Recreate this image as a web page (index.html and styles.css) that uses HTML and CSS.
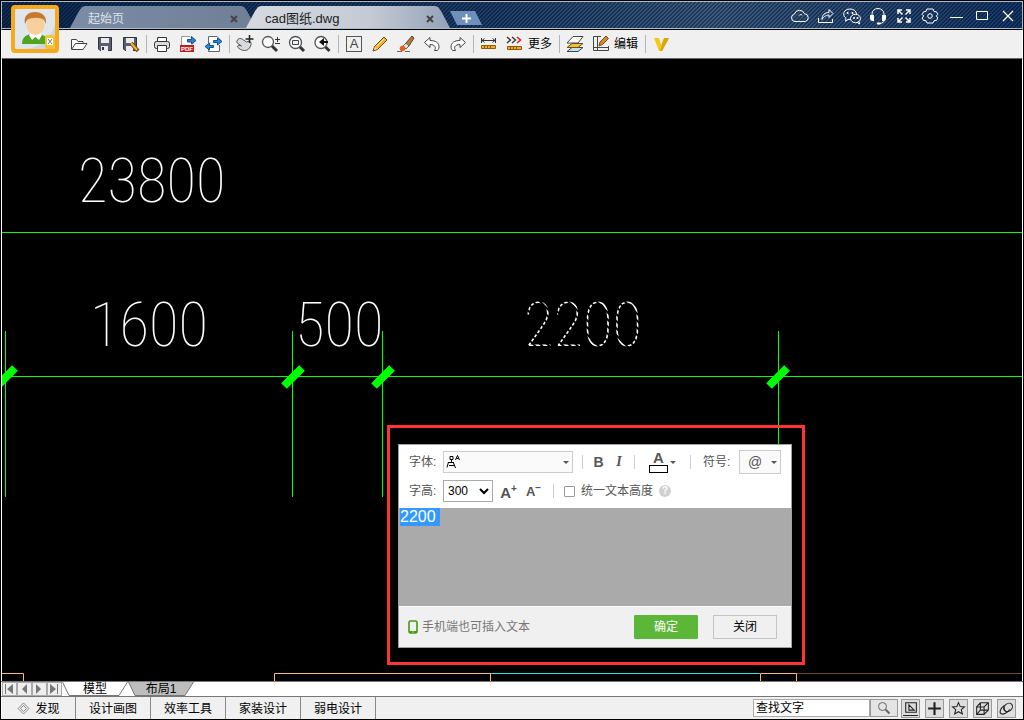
FILE: index.html
```
<!DOCTYPE html>
<html lang="zh-CN">
<head>
  <meta charset="UTF-8" />
  <meta name="viewport" content="width=device-width, initial-scale=1.0"/>
  <title>cad图纸.dwg</title>
  <link rel="stylesheet" href="styles.css">
</head>
<body>

  <header class="titlebar">
    <div class="tabs">
      <div class="tab"><span>起始页</span><button class="tab-close" aria-label="关闭起始页"><svg width="8" height="8" viewBox="0 0 8 8"><path d="M1 1l6 6M7 1l-6 6"/></svg></button></div>
      <div class="tab active"><span>cad图纸.dwg</span><button class="tab-close" aria-label="关闭图纸"><svg width="8" height="8" viewBox="0 0 8 8"><path d="M1 1l6 6M7 1l-6 6"/></svg></button></div>
      <button class="tab-new" aria-label="新建"><svg width="9" height="9" viewBox="0 0 9 9"><path d="M4.5 0v9M0 4.5h9"/></svg></button>
    </div>
    <div class="window-buttons">
      <button aria-label="云"><svg viewBox="0 0 20 20"><path d="M5 15.500a3.700 3.700 0 0 1-.6-7.300A5.300 5.300 0 0 1 14.500 7.800a3.900 3.900 0 0 1 .7 7.700zM9 9.500c.6-1.200 2.500-1.300 3.300 0"/></svg></button>
      <button aria-label="分享"><svg viewBox="0 0 20 20"><path d="M2.500 12v4.500h14V13M6 13.500c0-5 3-7 7-7V3.500l4 4-4 4V9c-2 0-5 1-7 4.500z"/></svg></button>
      <button aria-label="微信"><svg viewBox="0 0 20 20"><path d="M8.500 13.500H6l-2.500 1.800.5-3C-.5 9 2 3 8 3c4 0 6.300 2.300 6.500 5"/><ellipse cx="13.500" cy="12.500" rx="5" ry="4.200"/><path d="M15 16.300l2.500 1.700-.3-2.700"/><circle class="dot" cx="5.700" cy="7" r="1"/><circle class="dot" cx="10.500" cy="7" r="1"/><circle class="dot" cx="12" cy="12" r="1"/><circle class="dot" cx="15.500" cy="12" r="1"/></svg></button>
      <button aria-label="客服"><svg viewBox="0 0 20 20"><path d="M4 11V8a6 5.500 0 0 1 12 0v3M16.500 13c0 3-2 4.500-5 4.500"/><path class="dot" d="M2 9h4v6H4.500C2.500 15 2 13 2 12zM18 9h-4v6h1.500c2 0 2.500-2 2.500-3zM9 16.500h3.500v2H9z"/></svg></button>
      <button aria-label="全屏"><svg viewBox="0 0 20 20"><path stroke-width="1.500" d="M4 8V4h4M4 4l4.500 4.500M12 4h4v4M16 4l-4.500 4.500M4 12v4h4M4 16l4.500-4.500M12 16h4v-4M16 16l-4.500-4.500"/></svg></button>
      <button aria-label="设置"><svg viewBox="0 0 20 20"><path d="M7 3h6l1 2.500 2.500.3 1.300 2.700-1.500 1.500 1.500 2-1.300 2.500-2.500.2L13 17H7l-1-2.300-2.500-.2L2.200 12l1.500-2-1.500-1.500 1.300-2.700L6 5.500z"/><circle cx="10" cy="10" r="2.300"/></svg></button>
      <button aria-label="最小化"><svg viewBox="0 0 20 20"><path d="M4 11.500h13"/></svg></button>
      <button aria-label="最大化"><svg viewBox="0 0 20 20"><path d="M4.500 5.500h11v8h-11z"/></svg></button>
      <button aria-label="关闭"><svg viewBox="0 0 20 20"><path stroke-width="1.300" d="M5 5l10 10M15 5L5 15"/></svg></button>
    </div>
    <button class="avatar" aria-label="用户">
      <svg viewBox="0 0 40 40" width="40" height="40">
        <path fill="#dfe6ec" d="M0 0h40v40H0z"/>
        <path fill="#cdd7e0" d="M40 16v24H8c14 0 26-8 32-24z"/>
        <path fill="#4fa51e" d="M7 35c0-6 3-9 9-10h8c6 1 9 4 9 10z"/>
        <path fill="#fff" d="M14 26l3-3h7l3 3-3 5-3.500-3-3.500 3z"/>
        <ellipse cx="20.500" cy="16" rx="9" ry="10" fill="#f9cf9b"/>
        <path fill="#c9792f" d="M10 15C8 6 14 3 20 3c7 0 12 4 11 12l-2-4c-3-3-13-3-17 0z"/>
        <rect x="30" y="26" width="10" height="14" rx="2" fill="#f4c437"/>
        <path fill="#fff" d="M32 29h6v7h-6z"/>
        <path stroke="#777" d="M33 30l4 5M37 30l-4 5"/>
      </svg>
    </button>
  </header>

  <nav class="toolbar">
    <button aria-label="打开"><svg viewBox="0 0 20 20"><path fill="#fff" stroke="#444" d="M2.500 15V5.500h5l1.500 2h5V10M2.500 15.500L6.500 9.500H18l-4 6z"/></svg></button>
    <button aria-label="保存"><svg viewBox="0 0 20 20"><path fill="#59606b" stroke="#30343b" d="M3.500 3.500h13v13H5l-1.500-1.500z"/><path fill="#e8ecf1" d="M6 4h8v5H6zM6 12h7v5H6z"/><path fill="#30343b" d="M7 13h2v3H7z"/></svg></button>
    <button aria-label="另存为"><svg viewBox="0 0 20 20"><path fill="#59606b" stroke="#30343b" d="M2.500 3.500h13v13H4l-1.500-1.500z"/><path fill="#e8ecf1" d="M5 4h8v5H5zM5 12h7v5H5z"/><path stroke="#7a4a10" stroke-width="4" d="M10 9l7 8"/><path stroke="#f2b23c" stroke-width="2" d="M10 9l6 7"/></svg></button>
    <i class="sep"></i>
    <button aria-label="打印"><svg viewBox="0 0 20 20"><path fill="#fff" stroke="#333" d="M5.500 8V3.500h9V8"/><rect x="2.500" y="7.500" width="15" height="7" rx="2" fill="#d9dce0" stroke="#333"/><path fill="#fff" stroke="#333" d="M5.500 11.500h9v6h-9z"/></svg></button>
    <button aria-label="导出PDF"><svg viewBox="0 0 20 20"><path fill="#fff" stroke="#999" d="M3.500 11V2.500H12l3 3V11"/><path fill="#c8161d" d="M2 11h14v7H2z"/><text class="pdf-text" x="3" y="17">PDF</text><path fill="#2b7fd0" stroke="#14508c" d="M9.500 5.500h4v-3l4.500 4-4.500 3.500V8h-4z"/></svg></button>
    <button aria-label="转换"><svg viewBox="0 0 20 20"><path fill="#fff" stroke="#666" d="M4.500 9V2.500H13l3 3M15.500 11v6.500h-11V15"/><path fill="#2b88d8" stroke="#14508c" d="M9.500 6.500h4v-2.500l4.500 3.500-4.500 3.500V8.500h-4zM9.500 11.500h-4V9L1 12.500 5.500 16v-2.500h4z"/></svg></button>
    <i class="sep"></i>
    <button aria-label="平移"><svg viewBox="0 0 20 20"><path fill="#d7dade" stroke="#555" d="M2.500 6c1-2 4-2 6 0l3 2 3-1c2 1 2 3 1 5-1 3-3 4.500-6 4.500-3 0-5-1.500-7-3.500 0-2 2-2 4-1L3 9.500c-1.500-.5-1.500-2-.5-3.500z"/><path stroke="#222" stroke-width="1.500" d="M14.500 1v8M10.500 5h8"/></svg></button>
    <button aria-label="缩放"><svg viewBox="0 0 20 20"><circle cx="7" cy="8" r="5.500" fill="#f9fbfc" stroke="#555" stroke-width="1.300"/><path stroke="#333" stroke-width="3" d="M11 12l5 5"/><path stroke="#333" d="M14 5.500h5M16.500 3v5M14 9.500h5"/></svg></button>
    <button aria-label="窗口缩放"><svg viewBox="0 0 20 20"><circle cx="8.500" cy="8.500" r="6" fill="#f9fbfc" stroke="#555" stroke-width="1.300"/><path fill="#e8f2f8" stroke="#444" d="M5.500 6.500h6v4h-6z"/><path stroke="#333" stroke-width="3" d="M13 13l4 4"/></svg></button>
    <button aria-label="上一视图"><svg viewBox="0 0 20 20"><circle cx="8" cy="8.500" r="6" fill="#f9fbfc" stroke="#555" stroke-width="1.300"/><path fill="#111" d="M6 8l5-4v3h4v2h-4v3z"/><path stroke="#333" stroke-width="3" d="M12.500 13l4 4"/></svg></button>
    <i class="sep"></i>
    <button aria-label="文字"><span class="letter-box">A</span></button>
    <button aria-label="铅笔"><svg viewBox="0 0 20 20"><path fill="#f5b52e" stroke="#7a4a10" d="M3 17l1.500-4.500L14 3l3 3-9.500 9.500z"/><path fill="#f7dcb0" d="M4 16l1-3 2 2z"/><path stroke="#fff0b0" d="M7 12l7-7"/></svg></button>
    <button aria-label="擦除"><svg viewBox="0 0 20 20"><path fill="#b27b45" stroke="#69401a" d="M10 9l6-7 2 2-5 8z"/><path fill="#ddd" stroke="#666" d="M7 12l3-3 3 3-3 3z"/><circle cx="6.500" cy="14.500" r="2.800" fill="#ef5a1c"/><path stroke="#666" d="M1 17.500h5M9 17.500h5"/></svg></button>
    <button aria-label="撤销"><svg viewBox="0 0 20 20"><path fill="#fff" stroke="#444" d="M2.500 8.500L8 3.500v3c6 0 9 2.500 9 6.500 0 1-.5 2.500-1.500 3.500h-3c2-3 .5-6-4.500-6v3z"/></svg></button>
    <button aria-label="重做"><svg viewBox="0 0 20 20"><path fill="#fff" stroke="#444" d="M17.500 8.500L12 3.500v3c-6 0-9 2.500-9 6.500 0 1 .5 2.500 1.500 3.500h3c-2-3-.5-6 4.500-6v3z"/></svg></button>
    <i class="sep"></i>
    <button aria-label="测量"><svg viewBox="0 0 20 20"><path stroke="#333" d="M2.500 4v5M16.500 4v5M3 6.500h13M5.500 4.500L3 6.500l2.500 2M13.500 4.500l2.500 2-2.500 2"/><path fill="#f0ae20" stroke="#8b5c0c" d="M2.500 11.500h14v3h-14z"/><path stroke="#8b5c0c" d="M5.500 12v2M8.500 12v2M11.500 12v2"/></svg></button>
    <button class="wide" aria-label="更多测量"><svg viewBox="0 0 20 20"><path stroke="#333" stroke-width="1.300" d="M2 3l3.500 3L2 9M7 3l3.500 3L7 9"/><path stroke="#e02020" stroke-width="1.600" d="M12 3l3.500 3-3.500 3"/><path fill="#f0ae20" stroke="#8b5c0c" d="M2.500 12.500h14v3h-14z"/><path stroke="#8b5c0c" d="M5.500 13v2M8.500 13v2M11.500 13v2"/></svg><span>更多</span></button>
    <i class="sep"></i>
    <button aria-label="图层"><svg viewBox="0 0 20 20"><path fill="#bfe3ee" stroke="#444" d="M2 17.500l5-4h11l-5 4z"/><path fill="#f6bd30" stroke="#6b5210" d="M2 13.500l5-4h11l-5 4z"/><path fill="#fff" stroke="#444" d="M2 9L8 2.500h10L13 9z"/></svg></button>
    <button class="wide" aria-label="编辑图纸"><svg viewBox="0 0 20 20"><path stroke="#444" d="M10 2.500H2.500v14h15V12M6.500 3v13M3 13.500h14"/><path fill="#d98a28" stroke="#7a4a10" d="M8 12l1-4 6-6 2.500 2.500-6 6z"/></svg><span>编辑</span></button>
    <i class="sep"></i>
    <button aria-label="会员"><svg viewBox="0 0 20 20"><path fill="#f5c81c" d="M3 4h5l2 7 3-7h5l-7 13H8z"/><path fill="#d8a50c" d="M13 4h5l-7 13H9z"/></svg></button>
  </nav>

  <main class="canvas">
    <svg class="drawing" width="100%" height="100%">
      <defs>
        <pattern id="dashes" width="5" height="5" patternUnits="userSpaceOnUse" patternTransform="rotate(-45)">
          <path fill="#fff" d="M0 0h3v5H0z"/>
        </pattern>
      </defs>
      <g class="dimension">
        <path d="M0 173.500h4000M0 317.500h4000M3.500 272v166M290.500 272v166M380.500 272v166M776.500 272v166"/>
        <path class="tick" d="M-5 327l18-18M282 327l18-18M372 327l18-18M767 327l18-18"/>
      </g>
      <g class="dim-text">
        <text x="76" y="143">23800</text>
        <text x="88" y="287">1600</text>
        <text x="293" y="287">500</text>
        <text class="picked" x="522" y="287">2200</text>
      </g>
      <g class="frame">
        <path d="M0 614.500h21.500V623M272.500 623v-8.500H488M488.500 614v9M758.500 623v-8.500h36V623"/>
        <path class="cyan" d="M489 614.500h269"/>
        <path class="brown" d="M795 614.500h3200"/>
      </g>
    </svg>

    <div class="highlight">
      <form class="text-editor">
        <div class="row">
          <label for="font">字体:</label>
          <span class="font-picker">
            <select id="font"><option></option></select>
            <svg width="14" height="14" viewBox="0 0 14 14"><path d="M4 1.500h3v3H4zM5.500 5v2M2 7.500h6M2.500 7L1 12.500M7.500 8l2 5M3 10.500h6M9.500 5l2-4.500 2 4.500M10.500 3.500h2"/></svg>
            <i class="caret"></i>
          </span>
          <i class="divider"></i>
          <button type="button" class="style-btn bold">B</button>
          <button type="button" class="style-btn italic">I</button>
          <i class="divider"></i>
          <button type="button" class="color-btn"><span class="color-letter">A</span><i class="caret"></i></button>
          <i class="divider"></i>
          <span class="symbol-label">符号:</span>
          <button type="button" class="symbol-btn">@<i class="caret"></i></button>
        </div>
        <div class="row">
          <label for="size">字高:</label>
          <select id="size"><option>300</option></select>
          <button type="button" class="size-btn">A<sup>+</sup></button>
          <button type="button" class="size-btn small">A<sup>−</sup></button>
          <i class="divider"></i>
          <input type="checkbox" id="unify">
          <label class="unify" for="unify">统一文本高度</label>
          <span class="help">?</span>
        </div>
        <textarea id="content" aria-label="文本内容">2200 </textarea>
        <div class="editor-footer">
          <svg width="10" height="14" viewBox="0 0 10 14"><rect x="1" y="1" width="8" height="12" rx="1.500" fill="none" stroke="#479a12" stroke-width="1.600"/><path fill="#479a12" d="M1 11h8v2H1z"/><path fill="#fff" d="M4.500 11.500h1v1h-1z"/></svg>
          <span>手机端也可插入文本</span>
          <button type="button" class="ok">确定</button>
          <button type="button" class="cancel">关闭</button>
        </div>
      </form>
    </div>
  </main>

  <div class="layouts">
    <button class="step" aria-label="第一个"><svg viewBox="0 0 12 10"><path d="M2 0h1v10H2zM10 0v10L4 5z"/></svg></button>
    <button class="step" aria-label="上一个"><svg viewBox="0 0 12 10"><path d="M9 0v10L4 5z"/></svg></button>
    <button class="step" aria-label="下一个"><svg viewBox="0 0 12 10"><path d="M3 0v10l5-5z"/></svg></button>
    <button class="step" aria-label="最后一个"><svg viewBox="0 0 12 10"><path d="M9 0h1v10H9zM2 0v10l6-5z"/></svg></button>
    <button class="layout-tab"><svg viewBox="0 0 66 14"><path fill="#fff" stroke="#777" d="M.5 0L7 13.500h50L65.500 0"/></svg><span>模型</span></button>
    <button class="layout-tab"><svg viewBox="0 0 66 14"><path fill="#bdbdbd" stroke="#777" d="M.5 0L7 13.500h50L65.500 0"/></svg><span>布局1</span></button>
  </div>

  <footer class="statusbar">
    <a href="#" class="panel discover"><svg width="13" height="13" viewBox="0 0 13 13"><path d="M6.500 1L12 6.500 6.500 12 1 6.500z"/><path d="M6.500 3.500l3 3-3 3-3-3z"/></svg>发现</a>
    <a href="#" class="panel">设计画图</a>
    <a href="#" class="panel">效率工具</a>
    <a href="#" class="panel">家装设计</a>
    <a href="#" class="panel">弱电设计</a>
    <div class="search">
      <input type="text" value="查找文字" aria-label="查找文字">
      <button aria-label="查找"><svg width="14" height="14" viewBox="0 0 14 14"><circle cx="5.500" cy="5.500" r="4"/><path stroke-width="2" d="M8.500 8.500l4 4"/></svg></button>
    </div>
    <div class="modes">
      <button aria-label="坐标"><svg viewBox="0 0 16 16"><path d="M3.500 2.500h10v9h-10zM1 14.500h14M6.500 4.500v5h5z"/></svg></button>
      <button aria-label="十字光标"><svg viewBox="0 0 16 16"><path stroke-width="2" d="M8 2v12M2 8h12"/></svg></button>
      <button aria-label="捕捉"><svg viewBox="0 0 16 16"><path d="M8 2.500l1.600 3.700 4 .3-3 2.600 1 4L8 11l-3.600 2.100 1-4-3-2.600 4-.3z"/></svg></button>
      <button aria-label="三维"><svg viewBox="0 0 16 16"><path d="M2.500 6.500h7v7h-7zM2.500 6.500L6 2.500h7.500v7L9.500 13.500M9.500 6.500l4-4M6 2.500v7h7.500M6 9.500l-3.500 4"/></svg></button>
      <button aria-label="动态观察"><svg viewBox="0 0 16 16"><ellipse cx="9.500" cy="7" rx="4.500" ry="3.500" transform="rotate(-40 9.500 7)"/><path d="M6 5C2 8 1 12 3 13s6-1 8-4M6 6c-1 3 1 5 3 5"/></svg></button>
    </div>
  </footer>

  <script>
    // open the editor with the current value selected
    const content = document.getElementById('content');
    content.focus();
    content.select();
  </script>

</body>
</html>
```
FILE: styles.css
```
/* ─── Reset & Body ───────────────────────────────────────────────────────── */
* { box-sizing: border-box; margin: 0; padding: 0; }
body {
  display: flex;
  flex-direction: column;
  height: 100vh;
  overflow: hidden;
  border: 1px solid #000;
  background: #000;
  color: #000;
  font: 12px/16px "Liberation Sans", "Noto Sans CJK SC", sans-serif;
}
button {
  border: 0;
  background: none;
  color: inherit;
  font: inherit;
}
input, select, textarea { font: inherit; color: inherit; outline: 0; }
svg { display: block; fill: none; }

/* ─── Title Bar ──────────────────────────────────────────────────────────── */
.titlebar {
  position: relative;
  display: flex;
  justify-content: space-between;
  height: 28px;
  flex: none;
  padding-left: 68px;
  border: 1px solid #a9bccb;
  background:
    linear-gradient(135deg, rgba(0,0,0,0.4) 25%, transparent 25%, transparent 50%, rgba(0,0,0,0.4) 50%, rgba(0,0,0,0.4) 75%, transparent 75%) 0 0 / 4px 4px,
    linear-gradient(90deg, #0d2c58, #1c3f6f 48%, #3a5c86 70%, #14386d);
}
.tabs { display: flex; align-items: flex-end; }
.tab {
  display: flex;
  align-items: center;
  justify-content: space-between;
  width: 186px;
  height: 22px;
  padding: 3px 16px 0 18px;
  background: linear-gradient(90deg, rgba(150,165,187,0.8), rgba(136,148,168,0.8));
  color: #dde3ec;
  font-size: 12px;
  clip-path: polygon(0 100%, 9px 5px, 12px 1px, 15px 0, calc(100% - 15px) 0, calc(100% - 12px) 1px, calc(100% - 9px) 5px, 100% 100%);
}
.tab.active {
  width: 204px;
  margin-left: -10px;
  padding: 3px 14px 0 19px;
  background: linear-gradient(90deg, #d5dae1, #c5cbd4 60%, rgba(155,168,188,0.95));
  color: #222;
  font-size: 13px;
}
.tab-close { padding: 2px; }
.tab-close svg { stroke: #444; stroke-width: 2; }
.tab-new {
  display: flex;
  align-items: center;
  justify-content: center;
  width: 32px;
  height: 14px;
  margin-bottom: 3px;
  background: #6f8fbd;
  clip-path: polygon(0 0, 25px 0, 100% 100%, 7px 100%);
}
.tab-new svg { stroke: #fff; stroke-width: 2; }
.window-buttons { display: flex; align-items: center; padding: 2px 1px 0 0; }
.window-buttons button {
  display: flex;
  justify-content: center;
  width: 26px;
}
.window-buttons svg { width: 20px; height: 20px; stroke: #fff; stroke-width: 1; }
.window-buttons .dot { fill: #fff; stroke: none; }
.avatar {
  position: absolute;
  z-index: 1;
  top: 3px;
  left: 9px;
  padding: 4px;
  border-radius: 4px;
  background: #f7a81b;
}

/* ─── Toolbar ────────────────────────────────────────────────────────────── */
.toolbar {
  display: flex;
  align-items: center;
  flex: none;
  height: 30px;
  padding-left: 64px;
  border: 1px solid #fff;
  border-top-color: #000;
  border-bottom-color: #666;
  background: #f0f0f0;
}
.toolbar button {
  display: flex;
  align-items: center;
  justify-content: center;
  width: 26px;
  height: 26px;
}
.toolbar .wide {
  justify-content: flex-start;
  width: auto;
  padding: 0 5px 0 3px;
  gap: 3px;
}
.toolbar svg { width: 20px; height: 20px; }
.sep {
  width: 1px;
  height: 18px;
  margin: 0 2px;
  background: #b4b4b4;
}
.pdf-text { fill: #fff; font: bold 6px "Liberation Sans", sans-serif; }
.letter-box {
  width: 16px;
  height: 16px;
  border: 1px solid #555;
  color: #444;
  font-size: 13px;
  line-height: 14px;
}

/* ─── Drawing ────────────────────────────────────────────────────────────── */
.canvas {
  position: relative;
  flex: 1;
  min-height: 0;
  border: solid #fff;
  border-width: 0 1px;
  overflow: hidden;
}
.drawing { position: absolute; inset: 0; }
.dimension { stroke: #0f0; }
.dimension .tick { stroke-width: 8; }
.dim-text {
  fill: #fff;
  font: 100 61px "Roboto Condensed", "Roboto", sans-serif;
}
.dim-text .picked { fill: url(#dashes); }
.frame { stroke: #f9b877; }
.frame .cyan { stroke: #2de2e6; }
.frame .brown { stroke: #704838; }

/* ─── Text Editor Dialog ─────────────────────────────────────────────────── */
.highlight {
  position: absolute;
  top: 366px;
  left: 385px;
  padding: 16px 10px 14px 8px;
  border: 3px solid #f33;
}
.text-editor {
  width: 394px;
  border: 1px solid #a0a0a0;
  background: #fff;
  color: #555;
}
.row {
  display: flex;
  align-items: center;
  height: 24px;
  margin-bottom: 5px;
  padding-left: 10px;
}
.row:first-child { margin-top: 5px; }
.row > label:first-child { width: 34px; }
.font-picker { position: relative; margin-right: 4px; }
.font-picker svg {
  position: absolute;
  top: 4px;
  left: 3px;
  stroke: #000;
}
.font-picker .caret {
  position: absolute;
  top: 10px;
  right: 4px;
  pointer-events: none;
}
select {
  display: block;
  height: 22px;
  border: 1px solid #ccc;
  border-radius: 0;
  background: #fafafa;
}
#font { width: 130px; appearance: none; }
#size {
  width: 50px;
  border-color: #aaa;
  background: #fff;
  color: #000;
}
.divider {
  width: 1px;
  height: 14px;
  margin: 0 5px;
  background: #ccc;
}
.style-btn { width: 21px; font-size: 14px; font-weight: bold; }
.italic { width: 20px; font-family: "Liberation Serif", serif; font-style: italic; }
.caret {
  border: solid transparent;
  border-width: 3px 3px 0;
  border-top-color: #555;
}
.color-btn {
  display: flex;
  align-items: center;
  justify-content: center;
  gap: 2px;
  width: 45px;
}
.color-letter {
  width: 19px;
  font-size: 15px;
  font-weight: bold;
  line-height: 14px;
}
.color-letter::after {
  content: "";
  display: block;
  height: 6px;
  border: 1px solid #000;
}
.symbol-label { width: 36px; margin-left: 7px; }
.symbol-btn {
  display: flex;
  align-items: center;
  justify-content: space-between;
  width: 42px;
  height: 24px;
  padding: 0 3px 0 8px;
  border: 1px solid #ccc;
  background: #fafafa;
  font-size: 14px;
}
.size-btn {
  width: 25px;
  padding-top: 3px;
  font-size: 15px;
  font-weight: bold;
  line-height: 16px;
}
#size + .size-btn { margin-left: 3px; }
.size-btn.small { margin-right: 2px; font-size: 13px; }
.size-btn sup { font-size: 10px; line-height: 8px; }
#unify {
  width: 11px;
  height: 11px;
  margin: 0 6px 0 5px;
  appearance: none;
  border: 1px solid #999;
  border-radius: 1px;
}
.help {
  width: 12px;
  height: 12px;
  margin-left: 6px;
  border-radius: 50%;
  background: #d0d0d0;
  color: #fff;
  font-size: 10px;
  font-weight: bold;
  line-height: 12px;
  text-align: center;
}
#content {
  display: block;
  width: 100%;
  height: 98px;
  padding-left: 1px;
  border: 0;
  background: #aaa;
  color: #fff;
  font: 16px/18px "Liberation Sans", sans-serif;
  resize: none;
}
#content::selection { background: #39f; color: #fff; }
.editor-footer {
  display: flex;
  align-items: center;
  gap: 15px;
  height: 41px;
  padding: 0 14px 0 9px;
  border-top: 1px solid #fff;
  background: #f0f0f0;
  color: #777;
}
.editor-footer span { flex: 1; margin-left: -11px; }
.editor-footer button {
  width: 64px;
  height: 24px;
  border: 1px solid #c4c4c4;
  color: #000;
}
.editor-footer .ok {
  border-color: #5cb637;
  border-radius: 1px;
  background: #5cb637;
  color: #fff;
}

/* ─── Layout Tabs ────────────────────────────────────────────────────────── */
.layouts {
  display: flex;
  flex: none;
  height: 16px;
  padding-left: 1px;
  border: solid #777;
  border-width: 1px 0;
  background: #fff;
}
.step {
  width: 15px;
  border: 1px solid #aaa;
  background: #eee;
}
.step svg { width: 12px; height: 10px; fill: #777; }
.layout-tab { position: relative; width: 66px; }
.layout-tab svg { position: absolute; inset: 0; }
.layout-tab span { position: relative; display: block; line-height: 12px; }

/* ─── Status Bar ─────────────────────────────────────────────────────────── */
.statusbar {
  display: flex;
  align-items: center;
  flex: none;
  height: 22px;
  padding-right: 7px;
  border-left: 1px solid #fff;
  background: #f0f0f0;
}
.panel {
  display: flex;
  align-items: center;
  justify-content: center;
  gap: 5px;
  width: 75px;
  height: 22px;
  padding-top: 1px;
  border-right: 1px solid #888;
  color: #000;
  text-decoration: none;
}
.discover { width: 74px; }
.panel svg { stroke: #888; }
.search { display: flex; height: 18px; margin-left: auto; }
.search input {
  width: 117px;
  padding: 0 2px;
  border: 1px solid #aaa;
  background: #fff;
}
.search button {
  display: flex;
  align-items: center;
  justify-content: center;
  width: 28px;
  border: 1px solid #999;
  background: #e4e4e4;
}
.search svg { stroke: #666; }
.modes { display: flex; gap: 5px; margin-left: 3px; }
.modes button {
  width: 19px;
  height: 19px;
  border: 1px solid #999;
  background: #ddd;
}
.modes svg { width: 17px; height: 17px; stroke: #222; }
```
